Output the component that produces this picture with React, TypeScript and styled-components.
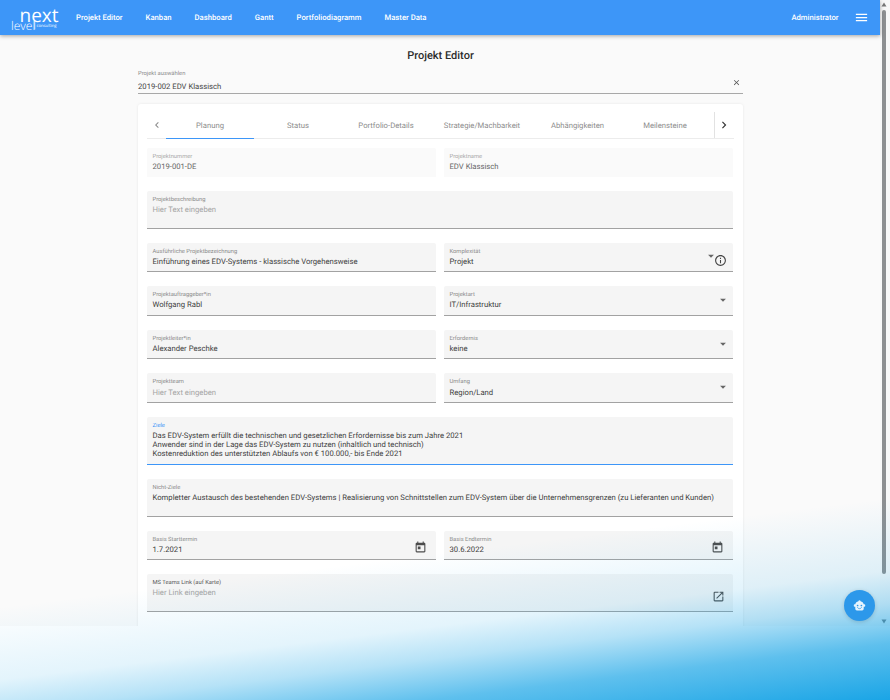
import React from "react";
import styled, { createGlobalStyle } from "styled-components";
import { MdArrowDropDown, MdChevronLeft, MdChevronRight, MdClose, MdInfoOutline, MdMenu, MdOpenInNew, MdToday } from "react-icons/md";

const Global = createGlobalStyle`
  html, body { margin: 0; padding: 0; background: #fff; }
  body { font-family: Roboto, "Liberation Sans", sans-serif; text-rendering: geometricPrecision; }
  * { box-sizing: border-box; }
`;

const Page = styled.div`
  position: relative;
  width: 890px;
  height: 700px;
  overflow: hidden;
  background: #fff;
`;
const Frame = styled.div`
  display: flex;
  height: 626px;
  overflow: hidden;
  background: #fafafa;
`;
const Main = styled.div`
  width: 880px;
  display: flex;
  flex-direction: column;
`;
const Nav = styled.header`
  flex: none;
  height: 35px;
  display: flex;
  align-items: center;
  padding: 0 11px 0 11px;
  background: #3d96f8;
  box-shadow: 0 1px 4px rgba(0, 0, 0, 0.35);
  color: #fff;
  font-size: 7.7px;
  font-weight: 500;
  position: relative;
  z-index: 1;
`;
const Logo = styled.svg`
  width: 51px;
  height: 30px;
  flex: none;
  margin: 0 14px 0 0;
`;
const NavLinks = styled.nav`
  display: flex;
  gap: 23px;
  flex: 1;
`;
const NavRight = styled.div`
  display: flex;
  align-items: center;
  gap: 15.5px;
`;
const Content = styled.main`
  flex: 1;
  padding: 14px 137px 0 138px;
`;
const Title = styled.h1`
  margin: 0;
  text-align: center;
  font-size: 11px;
  line-height: 13px;
  font-weight: 500;
  color: #2c2c2c;
`;
const ProjectSelect = styled.div`
  height: 32px;
  border-bottom: 1px solid #a8a8a8;
  display: flex;
  align-items: flex-end;
  justify-content: space-between;
`;
const SelectText = styled.div`
  display: flex;
  flex-direction: column;
`;
const SelectLabel = styled.span`
  font-size: 5.8px;
  line-height: 9px;
  color: #8a8a8a;
`;
const SelectValue = styled.span`
  font-size: 7.7px;
  line-height: 13px;
  margin-top: 1px;
  color: #444;
`;
const ClearButton = styled.span`
  display: flex;
  color: #555;
  font-size: 9px;
  margin: 0 2px 6px 0;
`;
const Card = styled.section`
  margin-top: 10px;
  padding: 8px 9px 24px 9px;
  background: #fff;
  border-radius: 3px;
  box-shadow: 0 0 3px rgba(0, 0, 0, 0.08);
`;
const TabBar = styled.div`
  display: flex;
  height: 27px;
  align-items: stretch;
  border-bottom: 1px solid #ececec;
`;
const TabArrow = styled.div<{ $strong?: boolean }>`
  flex: none;
  display: flex;
  align-items: center;
  justify-content: center;
  width: 19px;
  font-size: ${(p) => (p.$strong ? 14 : 12)}px;
  color: ${(p) => (p.$strong ? "#333" : "#888")};
  ${(p) => (p.$strong ? "border-left: 1px solid #e2e2e2; margin-left: 5px;" : "")}
`;
const Tab = styled.div<{ $active?: boolean; $width: number }>`
  flex: none;
  width: ${(p) => p.$width}px;
  display: flex;
  align-items: center;
  justify-content: center;
  font-size: 7.7px;
  font-weight: 400;
  color: #8c8c8c;
  margin-bottom: -1px;
  border-bottom: 1px solid ${(p) => (p.$active ? "#3d96f8" : "transparent")};
`;
const Grid = styled.div`
  display: grid;
  grid-template-columns: 289px 289px;
  column-gap: 8px;
  row-gap: 14.1px;
  padding-top: 9px;
`;
const Field = styled.div<{ $wide?: boolean; $h: number; $line?: string }>`
  ${(p) => (p.$wide ? "grid-column: 1 / -1;" : "")}
  height: ${(p) => p.$h}px;
  padding: 5px 6px 0 5.5px;
  background: ${(p) => (p.$line === "none" ? "#fafafa" : "#f5f5f5")};
  border-radius: 2px 2px 0 0;
  border-bottom: ${(p) => (p.$line === "none" ? "0" : `1px solid ${p.$line || "#a2a2a2"}`)};
  display: flex;
  align-items: flex-start;
  justify-content: space-between;
`;
const FieldText = styled.div`
  min-width: 0;
  flex: 1;
`;
const Label = styled.label<{ $color?: string }>`
  display: block;
  font-size: 5.8px;
  line-height: 8px;
  color: ${(p) => p.$color || "#8a8a8a"};
`;
const Value = styled.div<{ $muted?: boolean; $dim?: boolean }>`
  font-size: 7.7px;
  line-height: 9px;
  margin-top: 1.2px;
  white-space: pre-line;
  color: ${(p) => (p.$muted ? "#a4a4a4" : p.$dim ? "#666" : "#404040")};
`;
const FieldIcons = styled.div<{ $top: number; $right?: number }>`
  display: flex;
  align-items: flex-start;
  margin: ${(p) => p.$top}px ${(p) => p.$right || 0}px 0 0;
  color: #555;
  font-size: 13px;
`;
const Caret = styled(MdArrowDropDown)`
  color: #666;
  font-size: 14px;
`;
const InfoIcon = styled(MdInfoOutline)`
  color: #444;
  font-size: 13px;
  margin: 5px 0 0 -4px;
`;
const ToolIcon = styled.span`
  display: flex;
  color: #4c4c4c;
  font-size: 13px;
`;
const Scrollbar = styled.div`
  width: 10px;
  display: flex;
  flex-direction: column;
  align-items: center;
  padding: 2px 2px 2px 0;
  background: #f8f8f8;
`;
const ScrollArrow = styled.svg`
  width: 6px;
  height: 5px;
  flex: none;
  fill: #777;
`;
const ScrollThumb = styled.div`
  width: 4px;
  height: 564px;
  margin-top: 3px;
  background: #8d8f91;
  border-radius: 2px;
`;
const ScrollSpace = styled.div`
  flex: 1;
`;
const Fade = styled.div`
  position: absolute;
  inset: 0;
  pointer-events: none;
  background: linear-gradient(173deg, rgba(26, 165, 230, 0) 75%, rgba(26, 165, 230, 0.12) 84%, rgba(26, 165, 230, 0.32) 88%, rgba(26, 165, 230, 0.7) 93%, rgba(26, 165, 230, 1) 100%);
`;
const Fab = styled.div`
  position: absolute;
  left: 844px;
  top: 590px;
  width: 31px;
  height: 31px;
  border-radius: 50%;
  background: #2c98ea;
  display: flex;
  align-items: center;
  justify-content: center;
  box-shadow: 0 1px 4px rgba(0, 0, 0, 0.15);
`;
const BotIcon = styled.svg`
  width: 13px;
  height: 13px;
`;

const links = ["Projekt Editor", "Kanban", "Dashboard", "Gantt", "Portfoliodiagramm", "Master Data"];
const tabs: [string, number][] = [["Planung", 88], ["Status", 88], ["Portfolio-Details", 88], ["Strategie/Machbarkeit", 104], ["Abhängigkeiten", 87], ["Meilensteine", 88]];

export default function App() {
  return (
    <Page>
      <Global />
      <Frame>
        <Main>
          <Nav>
            <Logo viewBox="0 0 51 30">
              <text x="8.5" y="18.5" fontSize="19" fill="#fff" fontFamily="Open Sans, sans-serif" fontWeight="400">next</text>
              <text x="0" y="26.5" fontSize="12" fill="#fff" fontFamily="Open Sans, sans-serif" fontWeight="300">level</text>
              <rect x="23.5" y="17.5" width="0.7" height="9" fill="#fff" />
              <text x="25.5" y="23.5" fontSize="4.2" fill="#fff" fontFamily="Open Sans, sans-serif">consulting</text>
            </Logo>
            <NavLinks>
              {links.map((l) => <span key={l}>{l}</span>)}
            </NavLinks>
            <NavRight>
              <span>Administrator</span>
              <MdMenu size={15} />
            </NavRight>
          </Nav>
          <Content>
            <Title>Projekt Editor</Title>
            <ProjectSelect>
              <SelectText>
                <SelectLabel>Projekt auswählen</SelectLabel>
                <SelectValue>2019-002 EDV Klassisch</SelectValue>
              </SelectText>
              <ClearButton><MdClose /></ClearButton>
            </ProjectSelect>
            <Card>
              <TabBar>
                <TabArrow><MdChevronLeft /></TabArrow>
                {tabs.map(([t, w], i) => <Tab key={t} $width={w} $active={i === 0}>{t}</Tab>)}
                <TabArrow $strong><MdChevronRight /></TabArrow>
              </TabBar>
              <Grid>
                <Field $h={28.5} $line="none"><FieldText><Label $color="#a8a8a8">Projektnummer</Label><Value $dim>2019-001-DE</Value></FieldText></Field>
                <Field $h={28.5} $line="none"><FieldText><Label $color="#a8a8a8">Projektname</Label><Value $dim>EDV Klassisch</Value></FieldText></Field>
                <Field $wide $h={38}><FieldText><Label>Projektbeschreibung</Label><Value $muted>Hier Text eingeben</Value></FieldText></Field>
                <Field $h={29.5}><FieldText><Label>Ausführliche Projektbezeichnung</Label><Value>Einführung eines EDV-Systems - klassische Vorgehensweise</Value></FieldText></Field>
                <Field $h={29.5}><FieldText><Label>Komplexität</Label><Value>Projekt</Value></FieldText><FieldIcons $top={1}><Caret /><InfoIcon /></FieldIcons></Field>
                <Field $h={29.5}><FieldText><Label>Projektauftraggeber*in</Label><Value>Wolfgang Rabl</Value></FieldText></Field>
                <Field $h={29.5}><FieldText><Label>Projektart</Label><Value>IT/Infrastruktur</Value></FieldText><FieldIcons $top={2} $right={-3}><Caret /></FieldIcons></Field>
                <Field $h={29.5}><FieldText><Label>Projektleiter*in</Label><Value>Alexander Peschke</Value></FieldText></Field>
                <Field $h={29.5}><FieldText><Label>Erfordernis</Label><Value>keine</Value></FieldText><FieldIcons $top={2} $right={-3}><Caret /></FieldIcons></Field>
                <Field $h={29.5}><FieldText><Label>Projektteam</Label><Value $muted>Hier Text eingeben</Value></FieldText></Field>
                <Field $h={29.5}><FieldText><Label>Umfang</Label><Value>Region/Land</Value></FieldText><FieldIcons $top={2} $right={-3}><Caret /></FieldIcons></Field>
                <Field $wide $h={47.5} $line="#3d96f8">
                  <FieldText>
                    <Label $color="#3d96f8">Ziele</Label>
                    <Value>{"Das EDV-System erfüllt die technischen und gesetzlichen Erfordernisse bis zum Jahre 2021\nAnwender sind in der Lage das EDV-System zu nutzen (inhaltlich und technisch)\nKostenreduktion des unterstützten Ablaufs von € 100.000,- bis Ende 2021"}</Value>
                  </FieldText>
                </Field>
                <Field $wide $h={38.5}><FieldText><Label>Nicht-Ziele</Label><Value>Kompletter Austausch des bestehenden EDV-Systems | Realisierung von Schnittstellen zum EDV-System über die Unternehmensgrenzen (zu Lieferanten und Kunden)</Value></FieldText></Field>
                <Field $h={28.5}><FieldText><Label>Basis Starttermin</Label><Value>1.7.2021</Value></FieldText><FieldIcons $top={5} $right={3}><ToolIcon><MdToday /></ToolIcon></FieldIcons></Field>
                <Field $h={28.5}><FieldText><Label>Basis Endtermin</Label><Value>30.6.2022</Value></FieldText><FieldIcons $top={5} $right={3}><ToolIcon><MdToday /></ToolIcon></FieldIcons></Field>
                <Field $wide $h={38.5}><FieldText><Label $color="#555">MS Teams Link (auf Karte)</Label><Value $muted>Hier Link eingeben</Value></FieldText><FieldIcons $top={11} $right={2}><ToolIcon><MdOpenInNew /></ToolIcon></FieldIcons></Field>
              </Grid>
            </Card>
          </Content>
        </Main>
        <Scrollbar>
          <ScrollArrow viewBox="0 0 6 5"><path d="M3 0.5 L5.5 4.5 H0.5 Z" /></ScrollArrow>
          <ScrollThumb />
          <ScrollSpace />
          <ScrollArrow viewBox="0 0 6 5"><path d="M3 4.5 L5.5 0.5 H0.5 Z" /></ScrollArrow>
        </Scrollbar>
      </Frame>
      <Fade />
      <Fab>
        <BotIcon viewBox="0 0 24 24">
          <path fill="#e6f4fe" d="M12 2.5c1 0 1.8.6 2 1.5 3 .7 5.3 2.8 5.8 5.5H21a1.5 1.5 0 0 1 1.5 1.5v2a1.5 1.5 0 0 1-1.5 1.5h-1.2V18a3 3 0 0 1-3 3H7.2a3 3 0 0 1-3-3v-3.5H3A1.5 1.5 0 0 1 1.5 13v-2A1.5 1.5 0 0 1 3 9.5h1.2C4.7 6.8 7 4.7 10 4c.2-.9 1-1.5 2-1.5z" />
          <circle cx="8.5" cy="12" r="1.6" fill="#2c98ea" />
          <circle cx="15.5" cy="12" r="1.6" fill="#2c98ea" />
          <path d="M8.5 16c1 1.3 2.2 1.8 3.5 1.8s2.5-.5 3.5-1.8" fill="none" stroke="#2c98ea" strokeWidth="1.5" strokeLinecap="round" />
        </BotIcon>
      </Fab>
    </Page>
  );
}
